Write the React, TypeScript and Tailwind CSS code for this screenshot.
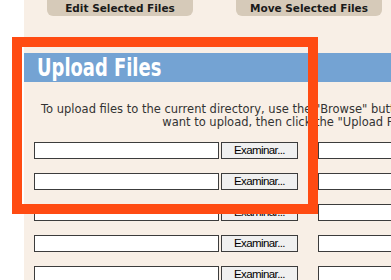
import React from 'react';

const rows = [0, 1, 2, 3, 4];

const FileRow: React.FC = () => (
  <div className="flex w-max">
    <div className="w-[185px] h-[17px] border border-[#3c3c3c] bg-white" />
    <div className="ml-[2px] w-[77px] h-[17px] border border-[#3c3c3c] bg-[#f0f0f0] flex items-center justify-center text-[11.5px] leading-none tracking-[-0.6px] text-black font-['Liberation_Sans',Arial,sans-serif]">
      Examinar...
    </div>
    <div className="ml-[20px] w-[185px] h-[17px] border border-[#3c3c3c] bg-white" />
  </div>
);

const App: React.FC = () => {
  return (
    <div className="relative w-[391px] h-[280px] overflow-hidden bg-white flex">
      <div className="w-[24px] shrink-0" />

      {/* Page panel */}
      <div className="flex-1 min-w-0 bg-[#f8efe6]">
        <div className="flex h-[16px] pl-[23px] gap-[43px]">
          <div className="w-[146px] h-[16px] rounded-b-[6px] bg-[#d6cab9] flex items-end justify-center pb-[3px] text-[10.5px] leading-none font-bold text-[#1a1a1a] font-['Verdana','DejaVu_Sans',sans-serif]">
            Edit Selected Files
          </div>
          <div className="w-[146px] h-[16px] rounded-b-[6px] bg-[#d6cab9] flex items-end justify-center pb-[3px] text-[10.5px] leading-none font-bold text-[#1a1a1a] font-['Verdana','DejaVu_Sans',sans-serif]">
            Move Selected Files
          </div>
        </div>

        <div className="mt-[37px] h-[29px] bg-[#74a3d3] pl-[13px] flex items-center">
          <span className="inline-block origin-left scale-x-[0.83] text-[24px] leading-none font-bold text-white font-['DejaVu_Sans_Condensed','DejaVu_Sans',sans-serif]">
            Upload Files
          </span>
        </div>

        <p className="mt-[21px] ml-[17px] w-max text-center text-[11.5px] leading-[13px] text-[#333] font-['Verdana','DejaVu_Sans',sans-serif]">
          To upload files to the current directory, use the "Browse" buttons below to select the files you
          <br />
          want to upload, then click the "Upload Files" button
        </p>

        <div className="mt-[13px] pl-[10px] flex flex-col gap-[14px]">
          {rows.map((r) => (
            <FileRow key={r} />
          ))}
        </div>
      </div>

      {/* Highlight annotation */}
      <div className="absolute left-[12px] top-[37px] w-[306px] h-[177px] border-[10px] border-[#ff4b12]" />
    </div>
  );
};

export default App;
